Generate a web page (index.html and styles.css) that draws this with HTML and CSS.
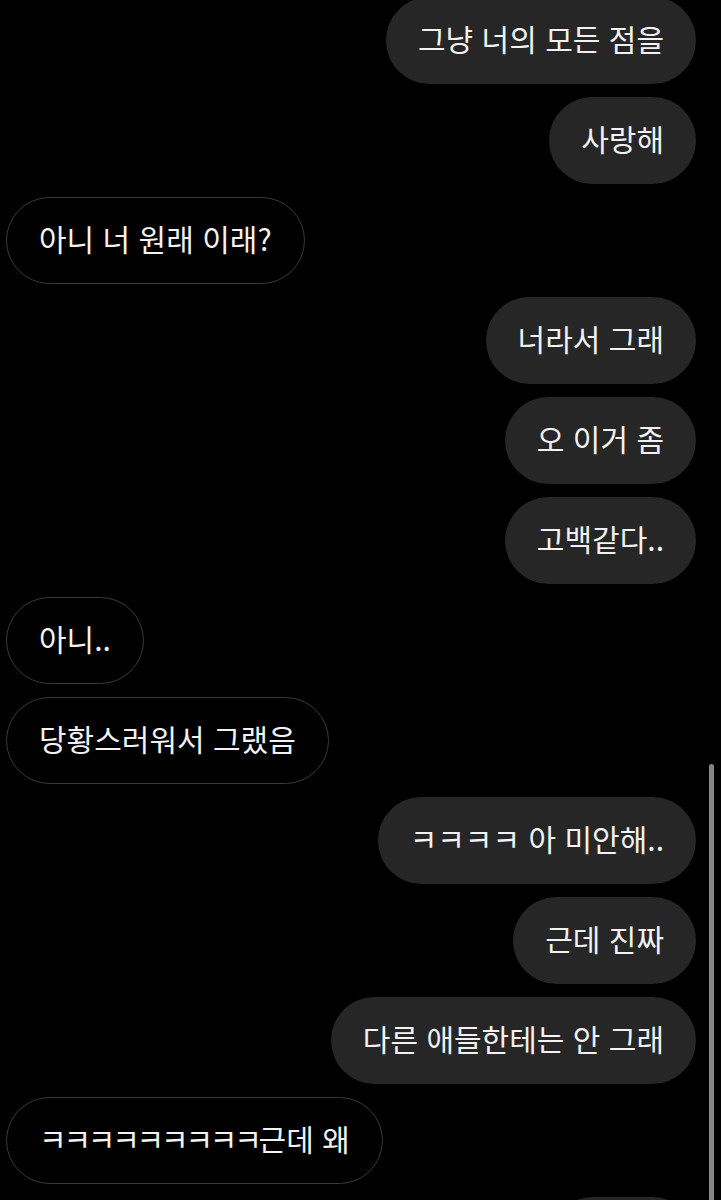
FILE: index.html
```html
<!DOCTYPE html>
<html lang="ko">
<head>
  <meta charset="UTF-8">
  <title>메시지</title>
  <meta name="viewport" content="width=device-width, initial-scale=1.0">
  <link rel="stylesheet" href="styles.css">
</head>
<body>

<div class="chat">
  <div class="msg sent">그냥 너의 모든 점을</div>
  <div class="msg sent">사랑해</div>
  <div class="msg recv">아니 너 원래 이래?</div>
  <div class="msg sent">너라서 그래</div>
  <div class="msg sent">오 이거 좀</div>
  <div class="msg sent">고백같다..</div>
  <div class="msg recv">아니..</div>
  <div class="msg recv">당황스러워서 그랬음</div>
  <div class="msg sent">ㅋㅋㅋㅋ 아 미안해..</div>
  <div class="msg sent">근데 진짜</div>
  <div class="msg sent">다른 애들한테는 안 그래</div>
  <div class="msg recv"><span class="laugh">ㅋㅋㅋㅋㅋㅋㅋㅋㅋ</span>근데 왜</div>
  <div class="msg sent">그니까</div>
</div>

<div class="scrollbar"></div>

</body>
</html>
```

FILE: styles.css
```css
* { box-sizing: border-box; margin: 0; padding: 0; }
html, body {
  background: #000;
  color: #f2f2f2;
  font-family: 'Noto Sans CJK KR', 'Noto Sans', sans-serif;
  overflow: hidden;
  height: 1200px;
}
.chat {
  display: flex;
  flex-direction: column;
  gap: 13px;
  padding: 0 25px 0 6px;
  margin-top: -3px;
}
.msg {
  height: 87px;
  display: flex;
  align-items: center;
  padding: 0 32px 5px;
  border-radius: 44px;
  font-size: 30px;
  white-space: nowrap;
}
.sent {
  align-self: flex-end;
  background: #262626;
}
.recv {
  align-self: flex-start;
  border: 1.5px solid #3a3a3a;
  background: #000;
}
.laugh {
  letter-spacing: -3.2px;
}
.scrollbar {
  position: fixed;
  right: 7px;
  top: 764px;
  bottom: 0;
  width: 5px;
  border-radius: 3px 3px 0 0;
  background: #858585;
}
```
